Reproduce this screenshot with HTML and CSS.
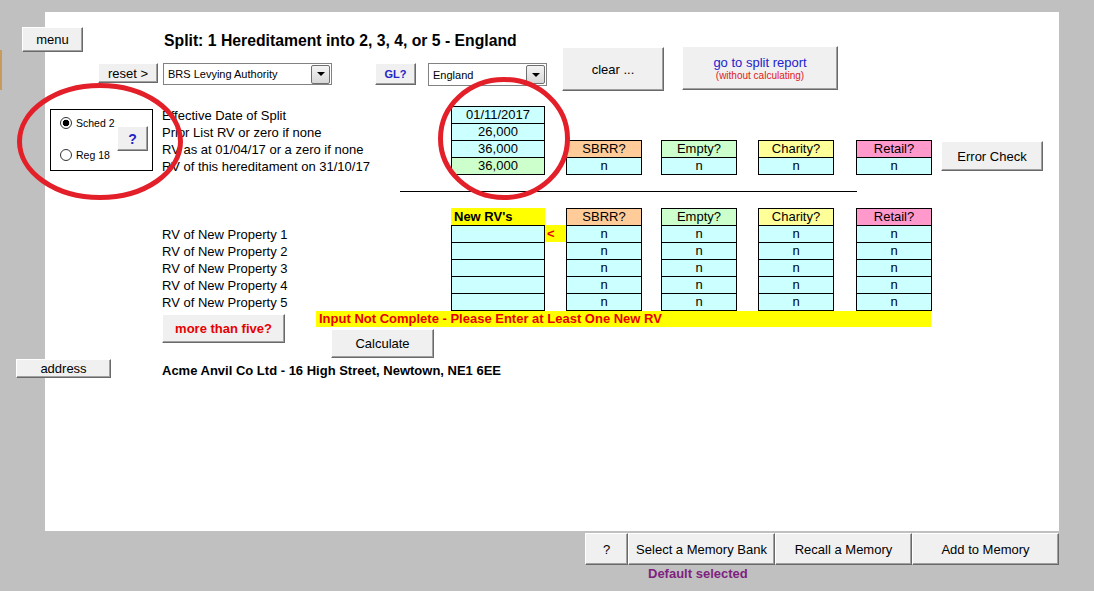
FILE: index.html
```html
<!DOCTYPE html>
<html lang="en">
<head>
  <meta charset="UTF-8">
  <meta name="viewport" content="width=device-width, initial-scale=1.0">
  <title>Split Hereditament</title>
  <link rel="stylesheet" href="styles.css">
</head>
<body>

  <div class="frame">
    <div class="gutter"><span class="mark"></span></div>

    <div class="sheet">
      <div class="top">
        <button class="btn menu">menu</button>
        <div class="head">
          <h1>Split: 1 Hereditament into 2, 3, 4, or 5 - England</h1>
          <div class="controls">
            <button class="btn reset">reset &gt;</button>
            <div class="select authority"><span>BRS Levying Authority</span><i class="arrow"></i></div>
            <button class="btn gl">GL?</button>
            <div class="select nation"><span>England</span><i class="arrow"></i></div>
          </div>
        </div>
        <button class="btn clear">clear ...</button>
        <button class="btn report">
          <span class="report-main">go to split report</span>
          <span class="report-sub">(without calculating)</span>
        </button>
      </div>

      <div class="current">
        <div class="radio-box">
          <div class="radios">
            <label class="radio"><span class="dot checked"></span>Sched 2</label>
            <label class="radio"><span class="dot"></span>Reg 18</label>
          </div>
          <button class="btn help">?</button>
        </div>
        <ul class="labels">
          <li>Effective Date of Split</li>
          <li>Prior List RV or zero if none</li>
          <li>RV as at 01/04/17 or a zero if none</li>
          <li>RV of this hereditament on 31/10/17</li>
        </ul>
        <div class="cells values">
          <div>01/11/2017</div>
          <div>26,000</div>
          <div>36,000</div>
          <div class="green">36,000</div>
        </div>
        <div class="cells flag sbrr"><div class="hd">SBRR?</div><div>n</div></div>
        <div class="cells flag empty"><div class="hd">Empty?</div><div>n</div></div>
        <div class="cells flag charity"><div class="hd">Charity?</div><div>n</div></div>
        <div class="cells flag retail"><div class="hd">Retail?</div><div>n</div></div>
        <button class="btn error">Error Check</button>
      </div>

      <hr class="divider">

      <div class="new">
        <ul class="labels">
          <li>RV of New Property 1</li>
          <li>RV of New Property 2</li>
          <li>RV of New Property 3</li>
          <li>RV of New Property 4</li>
          <li>RV of New Property 5</li>
        </ul>
        <div class="new-values">
          <div class="new-head">New RV's</div>
          <div class="cells values">
            <div></div><div></div><div></div><div></div><div></div>
          </div>
        </div>
        <div class="pointer">&lt;</div>
        <div class="cells flag sbrr"><div class="hd">SBRR?</div><div>n</div><div>n</div><div>n</div><div>n</div><div>n</div></div>
        <div class="cells flag empty"><div class="hd">Empty?</div><div>n</div><div>n</div><div>n</div><div>n</div><div>n</div></div>
        <div class="cells flag charity"><div class="hd">Charity?</div><div>n</div><div>n</div><div>n</div><div>n</div><div>n</div></div>
        <div class="cells flag retail"><div class="hd">Retail?</div><div>n</div><div>n</div><div>n</div><div>n</div><div>n</div></div>
      </div>

      <div class="actions">
        <button class="btn more">more than five?</button>
        <div class="status">
          <div class="warning">Input Not Complete - Please Enter at Least One New RV</div>
          <button class="btn calc">Calculate</button>
        </div>
      </div>

      <div class="address-row">
        <button class="btn address-btn">address</button>
        <p class="address">Acme Anvil Co Ltd - 16 High Street, Newtown, NE1 6EE</p>
      </div>
    </div>
  </div>

  <div class="memory">
    <button class="btn mem-help">?</button>
    <button class="btn mem-bank">Select a Memory Bank</button>
    <button class="btn mem-recall">Recall a Memory</button>
    <button class="btn mem-add">Add to Memory</button>
  </div>
  <p class="memory-status">Default selected</p>

  <!-- red annotation rings drawn over the sheet -->
  <svg class="marks" width="1094" height="591" viewBox="0 0 1094 591">
    <ellipse cx="100" cy="141.5" rx="80.5" ry="56" fill="none" stroke="#e3202a" stroke-width="5"/>
    <ellipse cx="504" cy="138.5" rx="63.5" ry="59" fill="none" stroke="#e3202a" stroke-width="5"/>
  </svg>

</body>
</html>
```

FILE: styles.css
```css
* {
  box-sizing: border-box;
  margin: 0;
  padding: 0;
}

body {
  position: relative;
  width: 1094px;
  height: 591px;
  overflow: hidden;
  background-color: #c0c0c0;
  font-family: "Liberation Sans", Arial, sans-serif;
  font-size: 13px;
  color: #000;
}

.frame {
  display: flex;
  padding-top: 12px;
}

.gutter {
  width: 45px;
  padding-top: 38px;
}

.mark {
  display: block;
  width: 2px;
  height: 40px;
  background-color: #c89a5c;
}

.sheet {
  width: 1014px;
  height: 519px;
  background-color: #fff;
}

.btn {
  flex-shrink: 0;
  background-color: #f0f0f0;
  border: 1px solid;
  border-color: #fff #696969 #696969 #fff;
  box-shadow: inset -1px -1px 0 #a0a0a0;
  font-family: inherit;
  font-size: 13px;
  color: #000;
  text-align: center;
}

/* top row */

.top {
  display: flex;
  align-items: flex-start;
  height: 94px;
}

.menu {
  margin: 15px 0 0 -23px;
  width: 61px;
  height: 25px;
}

.head {
  margin: 19px 0 0 15px;
  width: 449px;
}

.head h1 {
  padding-left: 66px;
  font-size: 15.75px;
  line-height: 20px;
  white-space: nowrap;
}

.controls {
  display: flex;
  align-items: flex-start;
  margin-top: 12px;
}

.reset {
  width: 60px;
  height: 20px;
}

.select {
  display: flex;
  align-items: center;
  justify-content: space-between;
  height: 22px;
  padding-left: 4px;
  border: 1px solid #828282;
  background-color: #fff;
  font-size: 11px;
}

.authority {
  margin-left: 5px;
  width: 169px;
}

.nation {
  margin-left: 12px;
  width: 119px;
  height: 23px;
}

.arrow {
  display: flex;
  align-items: center;
  justify-content: center;
  width: 19px;
  height: 19px;
  margin-right: 1px;
  border: 1px solid #6f6f6f;
  border-radius: 2px;
  background: linear-gradient(#f4f4f4, #d8d8d8);
}

.arrow::after {
  content: "";
  border-top: 4px solid #000;
  border-left: 4px solid transparent;
  border-right: 4px solid transparent;
}

.gl {
  margin-left: 43px;
  width: 41px;
  height: 22px;
  color: #2323c8;
  font-size: 11px;
  font-weight: bold;
}

.clear {
  margin: 35px 0 0 15px;
  width: 102px;
  height: 44px;
}

.report {
  display: flex;
  flex-direction: column;
  align-items: center;
  justify-content: center;
  margin: 34px 0 0 18px;
  width: 156px;
  height: 44px;
}

.report-main {
  color: #2222cc;
  line-height: 14px;
}

.report-sub {
  color: #e02020;
  font-size: 10px;
  line-height: 11px;
}

/* current hereditament */

.current {
  display: flex;
  align-items: flex-start;
  height: 69px;
}

.radio-box {
  display: flex;
  margin: 3px 0 0 5px;
  width: 103px;
  height: 62px;
  padding: 6px 0 0 9px;
  border: 1px solid #000;
}

.radios {
  display: flex;
  flex-direction: column;
  gap: 19px;
  width: 57px;
}

.radio {
  display: flex;
  align-items: center;
  gap: 4px;
  height: 13px;
  font-size: 10.5px;
}

.dot {
  width: 12px;
  height: 12px;
  border: 1px solid #333;
  border-radius: 50%;
  background-color: #fff;
}

.dot.checked {
  background: radial-gradient(circle, #000 0 3px, #fff 3.6px);
}

.help {
  margin-top: 10px;
  width: 31px;
  height: 25px;
  color: #2323c8;
  font-size: 14px;
  font-weight: bold;
}

.labels {
  list-style: none;
  margin-left: 9px;
  width: 289px;
  padding-top: 1px;
  line-height: 17px;
  white-space: nowrap;
}

.cells {
  border: 1px solid #000;
  text-align: center;
}

.cells > div {
  height: 17px;
  line-height: 16px;
  border-top: 1px solid #000;
  background-color: #ccffff;
}

.cells > div:first-child {
  height: 16px;
  border-top: 0;
}

.values {
  width: 94px;
}

.cells > .green {
  background-color: #ccffcc;
}

.flag {
  width: 76px;
}

.current .flag {
  margin-top: 34px;
}

.sbrr .hd { background-color: #ffcc99; }
.empty .hd { background-color: #ccffcc; }
.charity .hd { background-color: #ffff99; }
.retail .hd { background-color: #ff99cc; }

.current .sbrr { margin-left: 21px; }
.empty { margin-left: 19px; }
.charity { margin-left: 21px; }
.retail { margin-left: 22px; }

.error {
  margin: 35px 0 0 9px;
  width: 102px;
  height: 30px;
}

.divider {
  width: 457px;
  height: 1px;
  margin: 16px 0 0 355px;
  border: 0;
  background-color: #000;
}

/* new properties */

.new {
  display: flex;
  align-items: flex-start;
  height: 103px;
  margin-top: 16px;
}

.new .labels {
  margin-left: 117px;
  padding-top: 18px;
}

.new-head {
  height: 17px;
  padding-left: 3px;
  line-height: 17px;
  background-color: #ffff00;
  font-weight: bold;
}

.pointer {
  width: 21px;
  height: 17px;
  margin-top: 17px;
  padding-left: 2px;
  line-height: 17px;
  background-color: #ffff00;
  color: #e60000;
  font-weight: bold;
}

.actions {
  display: flex;
  align-items: flex-start;
  height: 47px;
}

.more {
  margin: 3px 0 0 117px;
  width: 123px;
  height: 29px;
  color: #e60000;
  font-weight: bold;
}

.status {
  margin-left: 31px;
}

.warning {
  width: 615px;
  height: 16px;
  padding-left: 3px;
  line-height: 16px;
  background-color: #ffff00;
  color: #e60000;
  font-weight: bold;
}

.calc {
  margin: 2px 0 0 15px;
  width: 103px;
  height: 29px;
}

.address-row {
  display: flex;
  align-items: flex-start;
  margin-top: 1px;
}

.address-btn {
  margin-left: -29px;
  width: 95px;
  height: 19px;
}

.address {
  margin-left: 51px;
  padding-top: 2px;
  line-height: 19px;
  font-weight: bold;
}

/* memory bar under the sheet */

.memory {
  display: flex;
  margin: 2px 0 0 585px;
}

.memory .btn {
  height: 32px;
}

.mem-help { width: 43px; }
.mem-bank { width: 147px; }
.mem-recall { width: 137px; }
.mem-add { width: 147px; }

.memory-status {
  margin: 2px 0 0 648px;
  line-height: 14px;
  color: #7f1f7f;
  font-weight: bold;
}

.marks {
  position: absolute;
  top: 0;
  left: 0;
  pointer-events: none;
}
```
